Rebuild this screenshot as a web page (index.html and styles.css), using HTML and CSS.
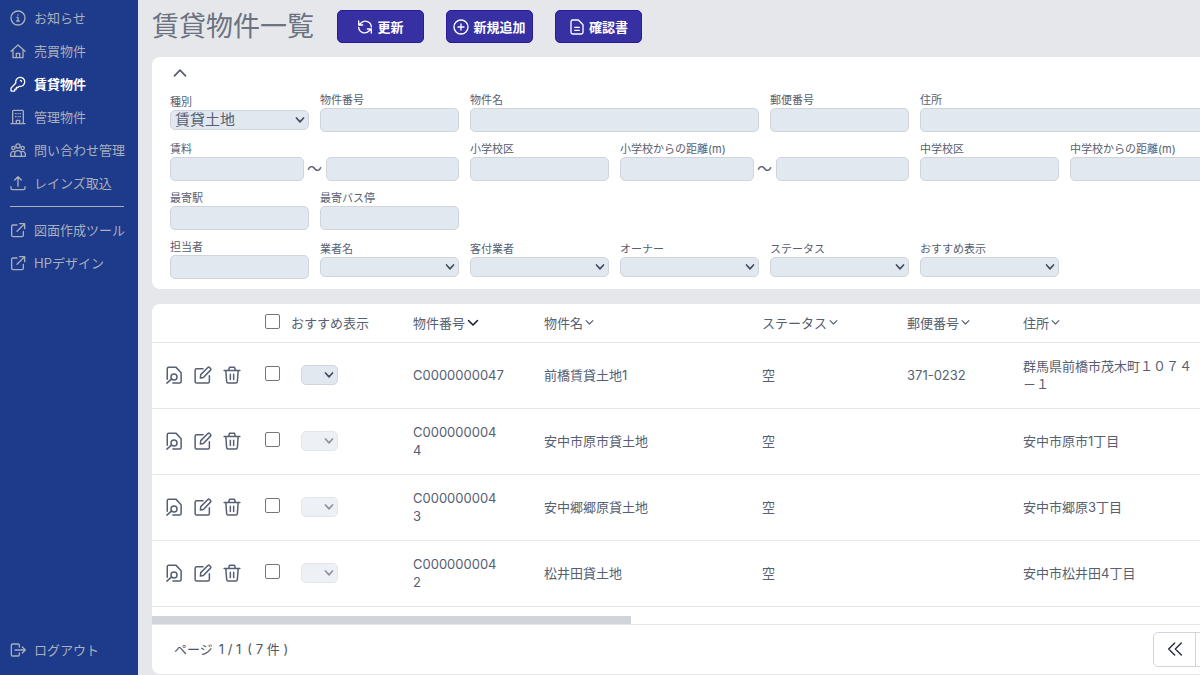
FILE: index.html
```
<!DOCTYPE html>
<html lang="ja">
<head>
<meta charset="utf-8">
<meta name="viewport" content="width=device-width, initial-scale=1">
<title>賃貸物件一覧</title>
<link rel="stylesheet" href="styles.css">
</head>
<body>
<svg class="sprite" aria-hidden="true">
  <symbol id="info" viewBox="0 0 24 24"><circle cx="12" cy="12" r="10.5"/><path d="M10.500 11H12v5.500M10 16.500h4M12 7.200v.4"/></symbol>
  <symbol id="home" viewBox="0 0 24 24"><path d="M1.500 12.500 12 3l10.500 9.500M4.500 10v12h15V10M9.500 22v-6.500h5V22"/></symbol>
  <symbol id="key" viewBox="0 0 24 24"><path d="M8.700 10.500A6.800 6.800 0 1 1 14 15.500l-2.200 1.800H9.600v2.400H7.200V22l-1 .8H2.500q-1 0-1-1v-3.600zM15.500 6.500q1.800 0 1.800 1.800"/></symbol>
  <symbol id="building" viewBox="0 0 24 24"><path d="M4 22V3.500q0-1.500 1.500-1.500h13Q20 2 20 3.500V22M1.500 22h21M9.500 22v-5h5v5M8.500 7h.5M12 7h.1M15 7h.5M8.500 11.500h.5M12 11.500h.1M15 11.500h.5"/></symbol>
  <symbol id="people" viewBox="0 0 24 24"><circle cx="12" cy="6" r="3.200"/><circle cx="5" cy="9" r="2.500"/><circle cx="19" cy="9" r="2.500"/><path d="M7 21.500V18a5 5 0 0 1 10 0v3.500zM7 21.500H1V18a4 4 0 0 1 6-3.400M17 21.500h6V18a4 4 0 0 0-6-3.400"/></symbol>
  <symbol id="upload" viewBox="0 0 24 24"><path d="M12 17V3M7 7.500l5-5 5 5M1.500 17.500V20q0 2 2 2h17q2 0 2-2v-2.500"/></symbol>
  <symbol id="external" viewBox="0 0 24 24"><path d="M10.500 4.500H4.500q-2 0-2 2V20q0 2 2 2H18q2 0 2-2v-6M14.500 2.500H22V10M22 2.500 10.500 14"/></symbol>
  <symbol id="logout" viewBox="0 0 24 24"><path d="M14 7.500V5q0-2-2-2H4Q2 3 2 5v14q0 2 2 2h8q2 0 2-2v-2.500M7.500 12H23M18.500 7.500 23 12l-4.500 4.500"/></symbol>
  <symbol id="refresh" viewBox="0 0 24 24"><path d="M2.500 3v6h6M3 9l3-3a9 9 0 0 1 15.500 6M21.500 21v-6h-6M21 15l-3 3A9 9 0 0 1 2.500 12.500"/></symbol>
  <symbol id="plus" viewBox="0 0 24 24"><circle cx="12" cy="12" r="10.500"/><path d="M12 7.500v9M7.500 12h9"/></symbol>
  <symbol id="file" viewBox="0 0 24 24"><path d="M5.500 1.500H14l7 7V20q0 2.500-2.500 2.500h-13Q3 22.500 3 20V4q0-2.500 2.500-2.500zM8.500 12.500h7M8.500 17h7"/></symbol>
  <symbol id="up" viewBox="0 0 24 24"><path d="m2.500 17 9.500-10 9.500 10"/></symbol>
  <symbol id="down" viewBox="0 0 24 24"><path d="m3 7 9 9 9-9"/></symbol>
  <symbol id="first" viewBox="0 0 24 24"><path d="m11.500 3-9 9 9 9M21.500 3l-9 9 9 9"/></symbol>
  <symbol id="inspect" viewBox="0 0 24 24"><path d="M3 17.500V3.500q0-2 2-2h9.500l7 7.500v11.500q0 2-2 2h-9M8.900 17.200 2.500 22.800"/><circle cx="12" cy="14.500" r="4"/></symbol>
  <symbol id="edit" viewBox="0 0 24 24"><path d="M12 3.500H3.500Q1.500 3.500 1.500 5.500v15q0 2 2 2h15q2 0 2-2V13M8.500 16l.5-4.500L18.500 2q1.200-1 2.200 0l1.300 1.300q1 1 0 2.200L12.500 15.200z"/></symbol>
  <symbol id="trash" viewBox="0 0 24 24"><path d="M1.500 6h21M7.500 6l1.200-4.500h6.600L16.500 6M3.800 6l1 14.500q.2 2 2.200 2h10q2 0 2.200-2l1-14.500M9.800 11v7M14.200 11v7"/></symbol>
</svg>

<div class="app">
  <nav class="sidebar" aria-label="メニュー">
    <a class="nav-item" href="#"><svg class="icon"><use href="#info"/></svg>お知らせ</a>
    <a class="nav-item" href="#"><svg class="icon"><use href="#home"/></svg>売買物件</a>
    <a class="nav-item current" href="#" aria-current="page"><svg class="icon"><use href="#key"/></svg>賃貸物件</a>
    <a class="nav-item" href="#"><svg class="icon"><use href="#building"/></svg>管理物件</a>
    <a class="nav-item" href="#"><svg class="icon"><use href="#people"/></svg>問い合わせ管理</a>
    <a class="nav-item" href="#"><svg class="icon"><use href="#upload"/></svg>レインズ取込</a>
    <hr class="divider">
    <a class="nav-item" href="#"><svg class="icon"><use href="#external"/></svg>図面作成ツール</a>
    <a class="nav-item" href="#"><svg class="icon"><use href="#external"/></svg>HPデザイン</a>
    <a class="nav-item logout" href="#"><svg class="icon"><use href="#logout"/></svg>ログアウト</a>
  </nav>

  <main class="main">
    <header class="page-head">
      <h1 class="title">賃貸物件一覧</h1>
      <div class="actions">
        <button class="action" type="button"><svg class="icon"><use href="#refresh"/></svg>更新</button>
        <button class="action" type="button"><svg class="icon"><use href="#plus"/></svg>新規追加</button>
        <button class="action" type="button"><svg class="icon"><use href="#file"/></svg>確認書</button>
      </div>
    </header>

    <section class="card filters">
      <button class="collapse" type="button" aria-label="検索条件を閉じる"><svg class="icon"><use href="#up"/></svg></button>
      <form class="filter-grid">
        <div class="field"><label for="kind">種別</label><select id="kind" class="control"><option>賃貸土地</option></select></div>
        <div class="field"><label for="no">物件番号</label><input id="no" class="control"></div>
        <div class="field span-2"><label for="name">物件名</label><input id="name" class="control"></div>
        <div class="field"><label for="zip">郵便番号</label><input id="zip" class="control"></div>
        <div class="field span-2"><label for="addr">住所</label><input id="addr" class="control"></div>

        <div class="field span-2 row-start"><label for="rent">賃料</label><div class="range"><input id="rent" class="control"><span>〜</span><input class="control" aria-label="賃料の上限"></div></div>
        <div class="field"><label for="es">小学校区</label><input id="es" class="control"></div>
        <div class="field span-2"><label for="esd">小学校からの距離(m)</label><div class="range"><input id="esd" class="control"><span>〜</span><input class="control" aria-label="小学校からの距離の上限"></div></div>
        <div class="field"><label for="jh">中学校区</label><input id="jh" class="control"></div>
        <div class="field"><label for="jhd">中学校からの距離(m)</label><input id="jhd" class="control"></div>

        <div class="field row-start"><label for="station">最寄駅</label><input id="station" class="control"></div>
        <div class="field"><label for="bus">最寄バス停</label><input id="bus" class="control"></div>

        <div class="field row-start"><label for="staff">担当者</label><input id="staff" class="control"></div>
        <div class="field"><label for="agent">業者名</label><select id="agent" class="control"><option></option></select></div>
        <div class="field"><label for="broker">客付業者</label><select id="broker" class="control"><option></option></select></div>
        <div class="field"><label for="owner">オーナー</label><select id="owner" class="control"><option></option></select></div>
        <div class="field"><label for="status">ステータス</label><select id="status" class="control"><option></option></select></div>
        <div class="field"><label for="rec">おすすめ表示</label><select id="rec" class="control"><option></option></select></div>
      </form>
    </section>

    <section class="card list">
      <table class="table">
        <colgroup><col class="c-tools"><col class="c-check"><col class="c-rec"><col class="c-no"><col class="c-name"><col class="c-status"><col class="c-zip"><col class="c-addr"></colgroup>
        <thead>
          <tr>
            <th></th>
            <th><input type="checkbox" class="check" aria-label="すべて選択"></th>
            <th>おすすめ表示</th>
            <th><button class="sort active" type="button">物件番号<svg class="icon"><use href="#down"/></svg></button></th>
            <th><button class="sort" type="button">物件名<svg class="icon"><use href="#down"/></svg></button></th>
            <th><button class="sort" type="button">ステータス<svg class="icon"><use href="#down"/></svg></button></th>
            <th><button class="sort" type="button">郵便番号<svg class="icon"><use href="#down"/></svg></button></th>
            <th><button class="sort" type="button">住所<svg class="icon"><use href="#down"/></svg></button></th>
          </tr>
        </thead>
        <tbody>
          <tr>
            <td><div class="tools"><button type="button" aria-label="詳細"><svg class="icon"><use href="#inspect"/></svg></button><button type="button" aria-label="編集"><svg class="icon"><use href="#edit"/></svg></button><button type="button" aria-label="削除"><svg class="icon"><use href="#trash"/></svg></button></div></td>
            <td><input type="checkbox" class="check" aria-label="C0000000047を選択"></td>
            <td><select class="control mini" aria-label="おすすめ表示"><option></option></select></td>
            <td>C0000000047</td><td>前橋賃貸土地1</td><td>空</td><td>371-0232</td><td>群馬県前橋市茂木町１０７４－１</td>
          </tr>
          <tr>
            <td><div class="tools"><button type="button" aria-label="詳細"><svg class="icon"><use href="#inspect"/></svg></button><button type="button" aria-label="編集"><svg class="icon"><use href="#edit"/></svg></button><button type="button" aria-label="削除"><svg class="icon"><use href="#trash"/></svg></button></div></td>
            <td><input type="checkbox" class="check" aria-label="C0000000044を選択"></td>
            <td><select class="control mini" aria-label="おすすめ表示" disabled><option></option></select></td>
            <td>C000000004<wbr>4</td><td>安中市原市貸土地</td><td>空</td><td></td><td>安中市原市1丁目</td>
          </tr>
          <tr>
            <td><div class="tools"><button type="button" aria-label="詳細"><svg class="icon"><use href="#inspect"/></svg></button><button type="button" aria-label="編集"><svg class="icon"><use href="#edit"/></svg></button><button type="button" aria-label="削除"><svg class="icon"><use href="#trash"/></svg></button></div></td>
            <td><input type="checkbox" class="check" aria-label="C0000000043を選択"></td>
            <td><select class="control mini" aria-label="おすすめ表示" disabled><option></option></select></td>
            <td>C000000004<wbr>3</td><td>安中郷郷原貸土地</td><td>空</td><td></td><td>安中市郷原3丁目</td>
          </tr>
          <tr>
            <td><div class="tools"><button type="button" aria-label="詳細"><svg class="icon"><use href="#inspect"/></svg></button><button type="button" aria-label="編集"><svg class="icon"><use href="#edit"/></svg></button><button type="button" aria-label="削除"><svg class="icon"><use href="#trash"/></svg></button></div></td>
            <td><input type="checkbox" class="check" aria-label="C0000000042を選択"></td>
            <td><select class="control mini" aria-label="おすすめ表示" disabled><option></option></select></td>
            <td>C000000004<wbr>2</td><td>松井田貸土地</td><td>空</td><td></td><td>安中市松井田4丁目</td>
          </tr>
        </tbody>
      </table>
      <div class="scrollbar"><div class="thumb"></div></div>
      <footer class="pager">
        <p class="pages"><span>ページ</span><span>1 / 1</span><span>( 7 件 )</span></p>
        <div class="pager-buttons">
          <button type="button" aria-label="最初のページ"><svg class="icon"><use href="#first"/></svg></button>
          <button type="button" aria-label="前のページ"></button>
        </div>
      </footer>
    </section>
  </main>
</div>
</body>
</html>
```
FILE: styles.css
```
* { box-sizing: border-box; }
body {
  margin: 0;
  background: #e5e7eb;
  color: #566072;
  font: 13px/18px Inter, "Noto Sans CJK JP", sans-serif;
}
button, input, select { font: inherit; color: inherit; margin: 0; }
button { background: none; border: 0; padding: 0; }
.sprite { position: absolute; width: 0; height: 0; }
.icon {
  width: 16px;
  height: 16px;
  flex: none;
  fill: none;
  stroke: currentColor;
  stroke-width: 2;
  stroke-linecap: round;
  stroke-linejoin: round;
}

.app { display: flex; height: 100vh; overflow: hidden; }

.sidebar {
  width: 138px;
  flex: none;
  display: flex;
  flex-direction: column;
  padding: 1px 10px 9px;
  background: #1e3a8a;
  color: #a9afbb;
}
.nav-item {
  display: flex;
  align-items: center;
  gap: 8px;
  height: 33px;
  color: inherit;
  text-decoration: none;
  white-space: nowrap;
}
.nav-item.current { color: #fff; font-weight: 700; }
.divider { width: 114px; margin: 7px 0 6px; border: 0; border-top: 1px solid #a9afbb; }
.logout { margin-top: auto; }

.main {
  flex: 1;
  min-width: 0;
  overflow: hidden;
  padding-left: 14px;
  display: flex;
  flex-direction: column;
  align-items: flex-start;
}
.page-head { display: flex; align-items: center; gap: 23px; height: 57px; flex: none; padding-bottom: 4px; }
.title { margin: 0; font-size: 27px; line-height: 40px; font-weight: 400; white-space: nowrap; color: #6b7280; }
.actions { display: flex; gap: 22px; }
.action {
  display: flex;
  align-items: center;
  justify-content: center;
  gap: 4px;
  width: 87px;
  height: 33px;
  border: 1px solid #2a1b96;
  border-radius: 5px;
  background: #3730a3;
  color: #fff;
  font-weight: 700;
  white-space: nowrap;
}

.card { background: #fff; border-radius: 8px; flex: none; }
.filters { padding: 8px 18px 10px; margin-bottom: 15px; }
.collapse { display: flex; align-items: center; justify-content: center; width: 20px; height: 16px; margin-bottom: 11px; }
.collapse .icon { width: 14px; height: 14px; stroke-width: 3; }
.filter-grid { display: grid; grid-template-columns: repeat(7, 139px); gap: 9px 11px; align-items: center; }
.field { display: flex; flex-direction: column; min-width: 0; }
.field label { font-size: 11px; line-height: 16px; white-space: nowrap; }
.span-2 { grid-column-end: span 2; }
.row-start { grid-column-start: 1; }
.control {
  width: 100%;
  min-width: 0;
  height: 24px;
  padding: 0 4px;
  border: 1px solid #d1d5db;
  border-radius: 5px;
  background: #e2e8f0;
}
select.control {
  height: 20px;
  appearance: none;
  font-size: 15px;
  line-height: 18px;
  background: #e2e8f0 url("data:image/svg+xml,%3Csvg xmlns='http://www.w3.org/2000/svg' viewBox='0 0 10 10'%3E%3Cpath d='m1.500 3 3.500 3.800L8.500 3' fill='none' stroke='%23465063' stroke-width='1.700' stroke-linecap='round' stroke-linejoin='round'/%3E%3C/svg%3E") no-repeat right 3px center / 10px 10px;
}
.range { display: flex; align-items: center; }
.range span { width: 22px; flex: none; text-align: center; font-size: 15px; }
.range .control { flex: 1; }

.table { width: 1210px; table-layout: fixed; border-collapse: collapse; }
.c-tools { width: 113px; }
.c-check { width: 26px; }
.c-rec { width: 122px; }
.c-no { width: 131px; }
.c-name { width: 218px; }
.c-status { width: 145px; }
.c-zip { width: 116px; }
.table th, .table td { padding: 0; text-align: left; font-weight: 400; vertical-align: middle; border-bottom: 1px solid #e5e7eb; }
.table th { height: 38px; white-space: nowrap; }
.table td { height: 66px; }
.table td:nth-child(4) { padding-right: 40px; }
.table td:first-child { padding-left: 13px; }
.table td:last-child { padding-right: 162px; }
.tools { display: flex; gap: 11px; }
.tools button { display: flex; }
.tools .icon { width: 18px; height: 18px; }
.check {
  display: block;
  appearance: none;
  width: 15px;
  height: 15px;
  margin-bottom: 3px;
  border: 1px solid #767676;
  border-radius: 2px;
  background: #fff;
}
.mini.control { display: block; width: 37px; margin-left: 10px; }
.mini:disabled { opacity: 0.6; }
.sort { display: flex; align-items: center; gap: 2px; }
.sort .icon { width: 9px; height: 9px; stroke-width: 3; }
.sort.active .icon { width: 12px; height: 12px; color: #111827; }

.scrollbar { padding-top: 9px; border-bottom: 1px solid #e5e7eb; }
.thumb { width: 479px; height: 8px; background: #d1d5db; }
.pager { display: flex; align-items: center; height: 49px; padding-left: 22px; }
.pages { display: flex; gap: 6px; margin: 0; width: 979px; color: #4b5563; }
.pager-buttons { display: flex; border: 1px solid #d1d5db; border-radius: 5px; }
.pager-buttons button { display: flex; align-items: center; justify-content: center; width: 41px; height: 33px; color: #1f2937; }
.pager-buttons button + button { border-left: 1px solid #d1d5db; }
```
